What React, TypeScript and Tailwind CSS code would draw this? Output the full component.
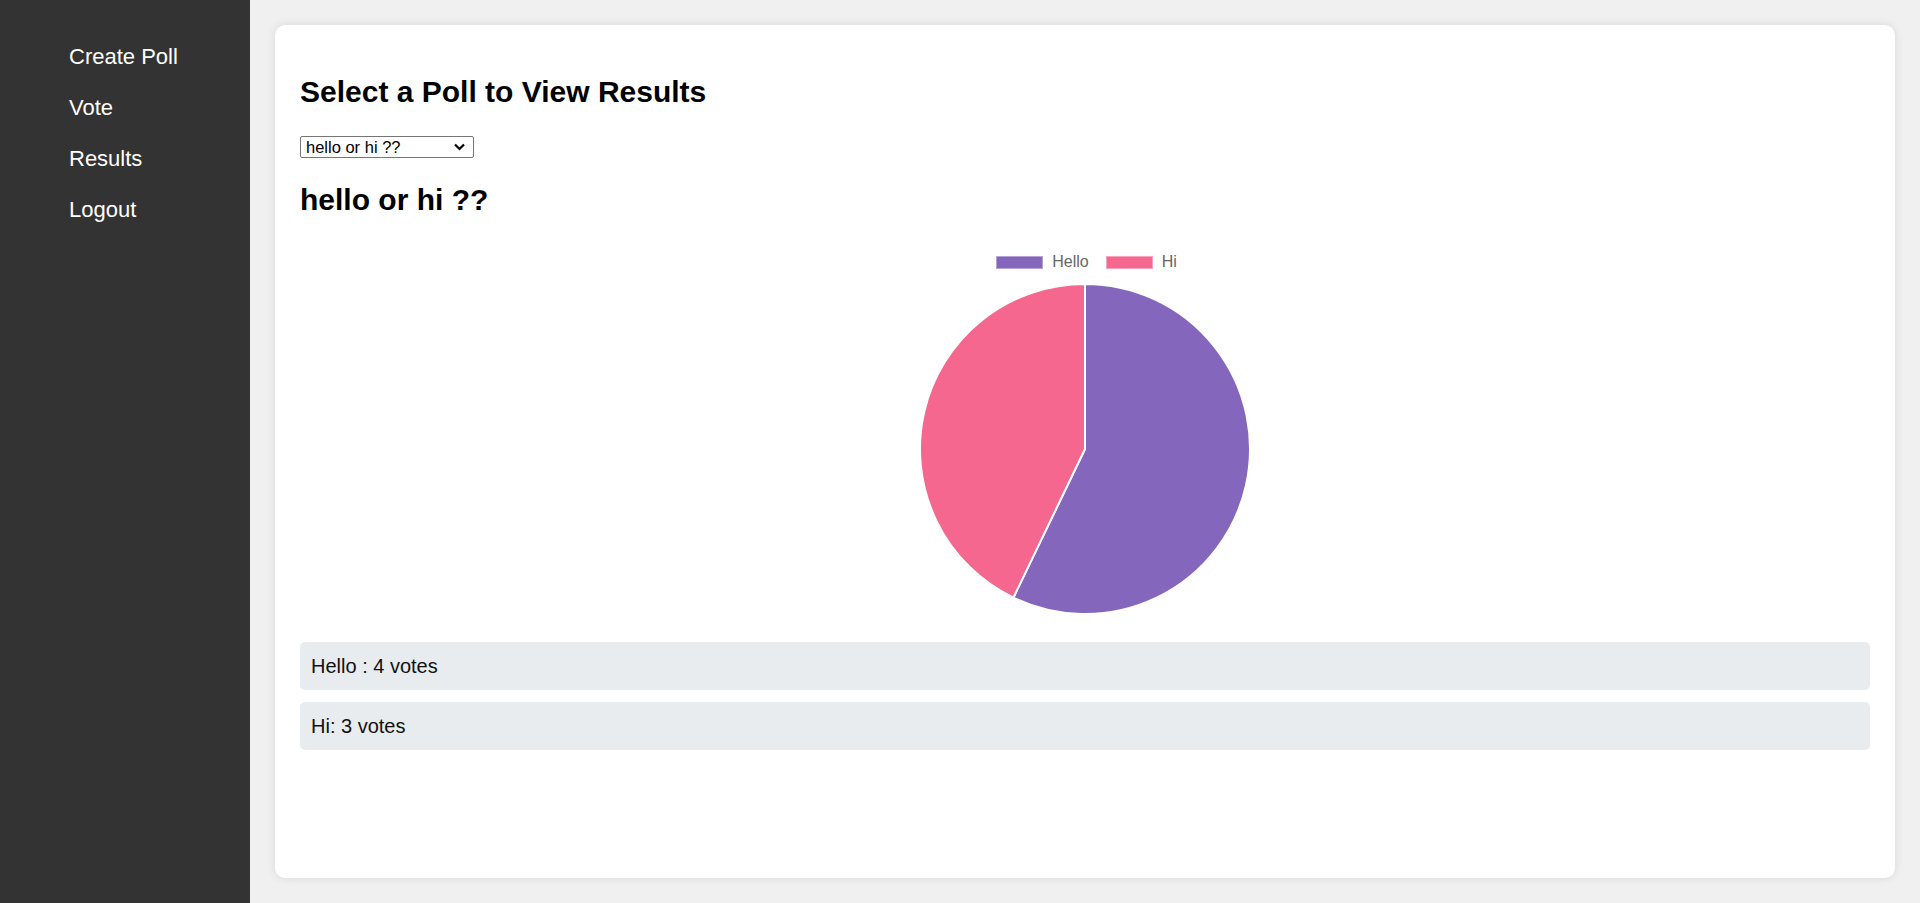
import React, { useState } from "react";

const polls = [
  {
    id: 1,
    question: "hello or hi ??",
    options: [
      { label: "Hello", votes: 4, color: "#8467bd", text: "Hello : 4 votes" },
      { label: "Hi", votes: 3, color: "#f6678f", text: "Hi: 3 votes" },
    ],
  },
];

const navLinks = ["Create Poll", "Vote", "Results", "Logout"];

const PieChart: React.FC<{ options: { votes: number; color: string }[] }> = ({ options }) => {
  const size = 332;
  const c = size / 2;
  const r = 165;
  const total = options.reduce((s, o) => s + o.votes, 0);
  let start = -Math.PI / 2;

  return (
    <svg width={size} height={size} viewBox={`0 0 ${size} ${size}`} className="block">
      {options.map((o, i) => {
        const angle = (o.votes / total) * Math.PI * 2;
        const end = start + angle;
        const x1 = c + r * Math.cos(start);
        const y1 = c + r * Math.sin(start);
        const x2 = c + r * Math.cos(end);
        const y2 = c + r * Math.sin(end);
        const large = angle > Math.PI ? 1 : 0;
        const d = `M ${c} ${c} L ${x1} ${y1} A ${r} ${r} 0 ${large} 1 ${x2} ${y2} Z`;
        start = end;
        return <path key={i} d={d} fill={o.color} stroke="#fff" strokeWidth={2} strokeLinejoin="round" />;
      })}
    </svg>
  );
};

const App: React.FC = () => {
  const [selected, setSelected] = useState(polls[0].id);
  const poll = polls.find((p) => p.id === selected) ?? polls[0];

  return (
    <div className="flex h-screen font-['Liberation_Sans',Arial,sans-serif] bg-[#f0f0f0]">
      {/* Sidebar */}
      <nav className="w-[250px] shrink-0 bg-[#333333] pt-[44px] pl-[69px]">
        <ul className="flex flex-col gap-[25px]">
          {navLinks.map((link) => (
            <li key={link} className="text-[22px] leading-[26px]">
              <a href="#" className="text-white">
                {link}
              </a>
            </li>
          ))}
        </ul>
      </nav>

      {/* Main */}
      <main className="flex-1 p-[25px]">
        <div className="h-full rounded-[10px] bg-white p-[25px] shadow-[0_0_10px_rgba(0,0,0,0.1)]">
          <h2 className="mt-[25px] text-[30px] leading-[34px] font-bold text-black">
            Select a Poll to View Results
          </h2>

          <div className="relative mt-[27px] w-[174px]">
            <select
              value={selected}
              onChange={(e) => setSelected(Number(e.target.value))}
              className="block h-[22px] w-full appearance-none rounded-[2px] border border-[#767676] bg-white pl-[5px] text-[16.5px] leading-[20px] text-black"
            >
              {polls.map((p) => (
                <option key={p.id} value={p.id}>
                  {p.question}
                </option>
              ))}
            </select>
            <svg
              className="pointer-events-none absolute right-[9px] top-[7px]"
              width="11"
              height="8"
              viewBox="0 0 11 8"
            >
              <path d="M1 1.5 L5.5 6 L10 1.5" fill="none" stroke="#000" strokeWidth="2.2" />
            </svg>
          </div>

          <h2 className="mt-[25px] text-[30px] leading-[34px] font-bold text-black">{poll.question}</h2>

          {/* Chart */}
          <div className="mt-[37px] flex flex-col items-center">
            <div className="flex h-4 items-center pl-[3px]">
              {poll.options.map((o, i) => (
                <div key={o.label} className={`flex items-center ${i > 0 ? "ml-[17px]" : ""}`}>
                  <span
                    className="h-[13px] w-[47px] border border-white/40"
                    style={{ backgroundColor: o.color }}
                  />
                  <span className="ml-[9px] text-[16px] leading-4 text-[#666666]">{o.label}</span>
                </div>
              ))}
            </div>
            <div className="mt-[13px]">
              <PieChart options={poll.options} />
            </div>
          </div>

          {/* Vote counts */}
          <div className="mt-[27px] flex flex-col gap-[12px]">
            {poll.options.map((o) => (
              <div
                key={o.label}
                className="flex h-[48px] items-center rounded-[5px] bg-[#e9ecef] pl-[11px] text-[20px] text-[#111111]"
              >
                {o.text}
              </div>
            ))}
          </div>
        </div>
      </main>
    </div>
  );
};

export default App;
